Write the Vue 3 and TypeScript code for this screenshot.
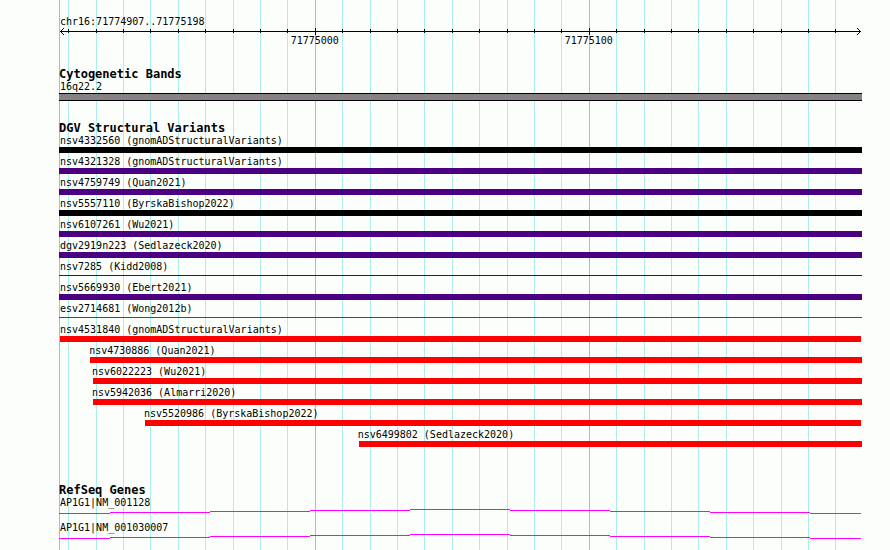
<script setup lang="ts">
type Variant = {
  id: string
  study: string
  kind: 'black' | 'indigo' | 'red'
  /** First base of the feature; omitted when it starts left of the view. */
  start?: number
  /** Ends inside the view rather than running past it. */
  endsInside?: boolean
  thin?: boolean
}

const viewStart = 71774907
const viewEnd = 71775198
const span = viewEnd - viewStart + 1

const fraction = (pos: number): number => (pos - viewStart) / span

const ticks: { pos: number; major: boolean }[] = []
for (let pos = Math.ceil(viewStart / 10) * 10; pos <= viewEnd; pos += 10) {
  ticks.push({ pos, major: pos % 100 === 0 })
}
const majorTicks = ticks.filter((t) => t.major)

const variants: Variant[] = [
  { id: 'nsv4332560', study: 'gnomADStructuralVariants', kind: 'black' },
  { id: 'nsv4321328', study: 'gnomADStructuralVariants', kind: 'indigo' },
  { id: 'nsv4759749', study: 'Quan2021', kind: 'indigo' },
  { id: 'nsv5557110', study: 'ByrskaBishop2022', kind: 'black' },
  { id: 'nsv6107261', study: 'Wu2021', kind: 'indigo' },
  { id: 'dgv2919n223', study: 'Sedlazeck2020', kind: 'indigo' },
  { id: 'nsv7285', study: 'Kidd2008', kind: 'indigo', thin: true },
  { id: 'nsv5669930', study: 'Ebert2021', kind: 'indigo' },
  { id: 'esv2714681', study: 'Wong2012b', kind: 'red', thin: true },
  { id: 'nsv4531840', study: 'gnomADStructuralVariants', kind: 'red', start: 71774907, endsInside: true },
  { id: 'nsv4730886', study: 'Quan2021', kind: 'red', start: 71774918 },
  { id: 'nsv6022223', study: 'Wu2021', kind: 'red', start: 71774919 },
  { id: 'nsv5942036', study: 'Almarri2020', kind: 'red', start: 71774919 },
  { id: 'nsv5520986', study: 'ByrskaBishop2022', kind: 'red', start: 71774938, endsInside: true },
  { id: 'nsv6499802', study: 'Sedlazeck2020', kind: 'red', start: 71775016 },
]

const genes: string[] = ['AP1G1|NM_001128', 'AP1G1|NM_001030007']

// Intron drawn as a shallow peak, one pixel per step.
const intron = [
  { x: 0, w: 51, y: 4 },
  { x: 51, w: 100, y: 3 },
  { x: 151, w: 100, y: 2 },
  { x: 251, w: 100, y: 1 },
  { x: 351, w: 100, y: 0 },
  { x: 451, w: 100, y: 1 },
  { x: 551, w: 100, y: 2 },
  { x: 651, w: 100, y: 3 },
  { x: 751, w: 51, y: 4 },
]
</script>

<template>
  <main class="browser">
    <div class="plot">
      <div class="grid" aria-hidden="true">
        <i class="line major edge"></i>
        <i
          v-for="t in ticks"
          :key="t.pos"
          class="line at"
          :class="{ major: t.major }"
          :style="{ '--f': fraction(t.pos) }"
        ></i>
      </div>

      <header class="ruler">
        <p class="label">chr16:{{ viewStart }}..{{ viewEnd }}</p>
        <div class="scale">
          <svg class="arrow" width="4" height="7" viewBox="0 0 4 7" shape-rendering="crispEdges">
            <path d="M0 3h1v1H0zM1 2h1v3H1zM2 1h1v1H2zM2 5h1v1H2zM3 0h1v1H3zM3 6h1v1H3z" />
          </svg>
          <span class="axis"></span>
          <svg class="arrow" width="4" height="7" viewBox="0 0 4 7" shape-rendering="crispEdges">
            <path d="M3 3h1v1H3zM2 2h1v3H2zM1 1h1v1H1zM1 5h1v1H1zM0 0h1v1H0zM0 6h1v1H0z" />
          </svg>
          <i
            v-for="t in ticks"
            :key="t.pos"
            class="tick at"
            :class="{ major: t.major }"
            :style="{ '--f': fraction(t.pos) }"
          ></i>
          <span
            v-for="t in majorTicks"
            :key="'n' + t.pos"
            class="number at"
            :style="{ '--f': fraction(t.pos) }"
          >{{ t.pos }}</span>
        </div>
      </header>

      <section class="track">
        <h2>Cytogenetic Bands</h2>
        <p class="label">16q22.2</p>
        <div class="band"></div>
      </section>

      <section class="track variants">
        <h2>DGV Structural Variants</h2>
        <ul>
          <li
            v-for="v in variants"
            :key="v.id"
            :class="[v.kind, { thin: v.thin, partial: v.start !== undefined, inside: v.endsInside }]"
            :style="{ '--f': v.start === undefined ? 0 : fraction(v.start) }"
          >
            <p class="label">{{ v.id }} ({{ v.study }})</p>
            <div class="bar"></div>
          </li>
        </ul>
      </section>

      <section class="track genes">
        <h2>RefSeq Genes</h2>
        <ul>
          <li v-for="g in genes" :key="g">
            <p class="label">{{ g }}</p>
            <svg class="intron" viewBox="0 0 802 5" preserveAspectRatio="none" shape-rendering="crispEdges">
              <rect v-for="s in intron" :key="s.x" :x="s.x" :y="s.y" :width="s.w" height="1" />
            </svg>
          </li>
        </ul>
      </section>
    </div>
  </main>
</template>

<style>
body {
  margin: 0;
  background: #fcfefc;
}
</style>

<style scoped>
.browser {
  box-sizing: border-box;
  min-height: 100vh;
  display: flex;
  padding: 0 28px 0 59px;
  color: #000;
  font: 10px/12px "DejaVu Sans Mono", monospace;
}

.plot {
  position: relative;
  flex: 1;
  min-width: 0;
  padding-top: 15px;
}

p,
h2,
ul {
  margin: 0;
  padding: 0;
}

ul {
  list-style: none;
}

h2 {
  font-size: 12px;
  line-height: 12px;
  font-weight: bold;
  white-space: nowrap;
}

.label {
  padding: 1px 0 0 1px;
  white-space: nowrap;
}

.at {
  position: absolute;
  left: calc(1px + (100% - 3px) * var(--f));
}

.grid {
  position: absolute;
  inset: 0;
  z-index: -1;
}

.line {
  position: absolute;
  top: 0;
  bottom: 0;
  width: 1px;
  background: #aceeec;
}

.line.major {
  background: #84caec;
}

.edge {
  left: 0;
}

.scale {
  position: relative;
  display: flex;
  align-items: center;
  height: 7px;
}

.arrow {
  flex: none;
}

.arrow:first-child {
  margin-left: 1px;
}

.axis {
  flex: 1;
  height: 1px;
  margin: 0 -3px;
  background: #000;
}

.arrow:nth-child(3) {
  margin-right: 1px;
}

.tick {
  top: 1px;
  width: 1px;
  height: 4px;
  background: #000;
}

.tick.major {
  top: 0;
  height: 7px;
}

.number {
  top: 7px;
  transform: translateX(-50%);
}

.track {
  margin-top: 33px;
}

.band {
  height: 6px;
  border: solid #000;
  border-width: 1px 0;
  background: #848284;
}

.variants {
  margin-top: 21px;
}

.variants li {
  height: 21px;
}

.variants .label {
  padding-left: max(1px, calc((100% - 3px) * var(--f)));
}

.bar {
  height: 6px;
}

.thin .bar {
  height: 1px;
  margin-top: 2px;
}

.partial .bar {
  margin-left: calc(1px + (100% - 3px) * var(--f));
}

.inside .bar {
  margin-right: 1px;
}

.black .bar {
  background: #000;
}

.indigo .bar {
  background: #4b0082;
}

.red .bar {
  background: #f00;
}

.genes {
  margin-top: 35px;
}

.genes li {
  height: 25px;
}

.intron {
  display: block;
  width: calc(100% - 1px);
  height: 5px;
  fill: #f0f;
}
</style>
